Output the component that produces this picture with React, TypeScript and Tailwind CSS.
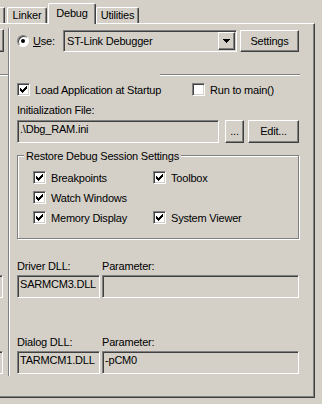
const sunken =
  'border border-t-[#808080] border-l-[#808080] border-b-white border-r-white shadow-[inset_1px_1px_0_#404040,inset_-1px_-1px_0_#d4d0c8]';
const raised =
  'border border-t-white border-l-white border-b-[#404040] border-r-[#404040] shadow-[inset_-1px_-1px_0_#808080]';

const CheckMark = () => (
  <svg width="7" height="7" viewBox="0 0 7 7" shapeRendering="crispEdges" className="block">
    <rect x="6" y="0" width="1" height="1" />
    <rect x="5" y="1" width="2" height="1" />
    <rect x="0" y="2" width="1" height="1" />
    <rect x="4" y="2" width="3" height="1" />
    <rect x="0" y="3" width="2" height="1" />
    <rect x="3" y="3" width="3" height="1" />
    <rect x="0" y="4" width="5" height="1" />
    <rect x="1" y="5" width="3" height="1" />
    <rect x="2" y="6" width="1" height="1" />
  </svg>
);

const Checkbox = ({ label, checked = true }: { label: string; checked?: boolean }) => (
  <div className="flex h-[13px] items-start">
    <span className={`${sunken} box-border h-[13px] w-[13px] shrink-0 bg-white p-[2px]`}>
      {checked && <CheckMark />}
    </span>
    <span className="ml-[5px] translate-y-[1px] whitespace-nowrap">{label}</span>
  </div>
);

const Button = ({ label, width }: { label: string; width: string }) => (
  <div className={`${raised} ${width} flex h-[23px] shrink-0 items-center justify-center`}>{label}</div>
);

const TextBox = ({ value, width }: { value: string; width: string }) => (
  <div className={`${sunken} ${width} h-[23px] shrink-0 overflow-hidden whitespace-nowrap bg-[#d4d0c8] pl-[2px] pt-[2px]`}>
    {value}
  </div>
);

const Tab = ({ label, width }: { label: string; width: string }) => (
  <div
    className={`${width} flex h-[16px] justify-center rounded-t-[2px] border-t border-l border-r border-t-white border-l-white border-r-[#404040] pt-[1px] shadow-[inset_-1px_0_0_#808080]`}
  >
    {label}
  </div>
);

export default function App() {
  return (
    <div className="h-[404px] w-[322px] overflow-hidden bg-[#d4d0c8] font-['Liberation_Sans',Arial,sans-serif] text-[11px] leading-[13px] tracking-[-0.2px] text-black select-none">
      {/* tab strip */}
      <div className="flex h-[23px] items-end">
        <div className="h-[16px] w-[5px] border-t border-r border-t-white border-r-[#404040] shadow-[inset_-1px_0_0_#808080]" />
        <div className="ml-[2px]">
          <Tab label="Linker" width="w-[40px]" />
        </div>
        <div className="relative z-10 -mb-[1px] ml-[1px] flex h-[21px] w-[48px] justify-center rounded-t-[2px] border-t border-l border-r border-t-white border-l-white border-r-[#404040] bg-[#d4d0c8] pt-[3px] shadow-[inset_-1px_0_0_#808080]">
          Debug
        </div>
        <Tab label="Utilities" width="w-[43px]" />
      </div>

      {/* tab page */}
      <div className="flex h-[375px] w-[315px] border-t border-r border-b border-t-white border-r-[#404040] border-b-[#404040] shadow-[inset_-1px_-1px_0_#808080]">
        {/* right edges of the simulator half, cut off */}
        <div className="flex w-[8px] flex-col">
          <div className="mt-[5px] h-[23px] w-[4px] border-t border-r border-b border-t-white border-r-[#404040] border-b-[#404040] shadow-[inset_-1px_-1px_0_#808080]" />
          <div className="mt-[22px] h-[2px] w-[8px] border-t border-b border-t-[#808080] border-b-white" />
          <div className="mt-[199px] h-[23px] w-[3px] border-t border-r border-b border-t-[#808080] border-r-white border-b-white shadow-[inset_0_1px_0_#404040]" />
          <div className="mt-[53px] h-[23px] w-[3px] border-t border-r border-b border-t-[#808080] border-r-white border-b-white shadow-[inset_0_1px_0_#404040]" />
        </div>

        <div className="mt-[4px] h-[348px] w-[2px] border-l border-r border-l-[#808080] border-r-white" />

        {/* debugger half */}
        <div className="flex w-[289px] flex-col pl-[7px]">
          <div className="mt-[6px] flex h-[22px] items-center">
            <div className="flex w-[46px] items-center">
              <span className="flex h-[12px] w-[12px] items-center justify-center rounded-full border border-t-[#808080] border-l-[#808080] border-b-white border-r-white bg-white shadow-[inset_1px_1px_0_#404040]">
                <span className="h-[4px] w-[4px] rounded-full bg-black" />
              </span>
              <span className="ml-[4px]">
                <span className="underline underline-offset-[1px]">U</span>se:
              </span>
            </div>
            <div className={`${sunken} flex h-[22px] w-[174px] items-center bg-[#d4d0c8] pl-[3px] pr-[1px]`}>
              <span className="whitespace-nowrap">ST-Link Debugger</span>
              <div className={`${raised} ml-auto flex h-[18px] w-[17px] items-center justify-center`}>
                <svg width="7" height="4" viewBox="0 0 7 4" shapeRendering="crispEdges">
                  <path d="M0 0h7v1h-1v1h-1v1h-1v1h-1v-1h-1v-1h-1v-1h-1z" />
                </svg>
              </div>
            </div>
            <div className={`${raised} ml-[3px] flex h-[22px] w-[59px] items-center justify-center`}>Settings</div>
          </div>

          <div className="ml-[143px] mt-[22px] h-[2px] w-[140px] border-t border-b border-t-[#808080] border-b-white" />

          <div className="mt-[7px] flex">
            <div className="w-[175px]">
              <Checkbox label="Load Application at Startup" />
            </div>
            <Checkbox label="Run to main()" checked={false} />
          </div>

          <div className="mt-[8px] h-[13px]">Initialization File:</div>

          <div className="mt-[3px] flex">
            <TextBox value=".\Dbg_RAM.ini" width="w-[202px]" />
            <div className="ml-[6px]">
              <Button label="..." width="w-[19px]" />
            </div>
            <div className="ml-[4px]">
              <Button label="Edit..." width="w-[51px]" />
            </div>
          </div>

          <div className="relative mt-[12px] h-[84px] w-[282px] border border-[#808080] shadow-[inset_1px_1px_0_white,1px_1px_0_white]">
            <span className="absolute -top-[6px] left-[6px] whitespace-nowrap bg-[#d4d0c8] px-[2px]">
              Restore Debug Session Settings
            </span>
            <div className="grid grid-cols-[120px_1fr] gap-y-[7px] pl-[15px] pt-[15px]">
              <Checkbox label="Breakpoints" />
              <Checkbox label="Toolbox" />
              <Checkbox label="Watch Windows" />
              <div />
              <Checkbox label="Memory Display" />
              <Checkbox label="System Viewer" />
            </div>
          </div>

          <div className="mt-[21px] flex h-[13px]">
            <span className="w-[85px]">Driver DLL:</span>
            <span>Parameter:</span>
          </div>
          <div className="mt-[2px] flex">
            <TextBox value="SARMCM3.DLL" width="w-[83px]" />
            <div className="ml-[2px]">
              <TextBox value="" width="w-[197px]" />
            </div>
          </div>

          <div className="mt-[38px] flex h-[13px]">
            <span className="w-[85px]">Dialog DLL:</span>
            <span>Parameter:</span>
          </div>
          <div className="mt-[2px] flex">
            <TextBox value="TARMCM1.DLL" width="w-[83px]" />
            <div className="ml-[2px]">
              <TextBox value="-pCM0" width="w-[197px]" />
            </div>
          </div>
        </div>
      </div>
    </div>
  );
}
